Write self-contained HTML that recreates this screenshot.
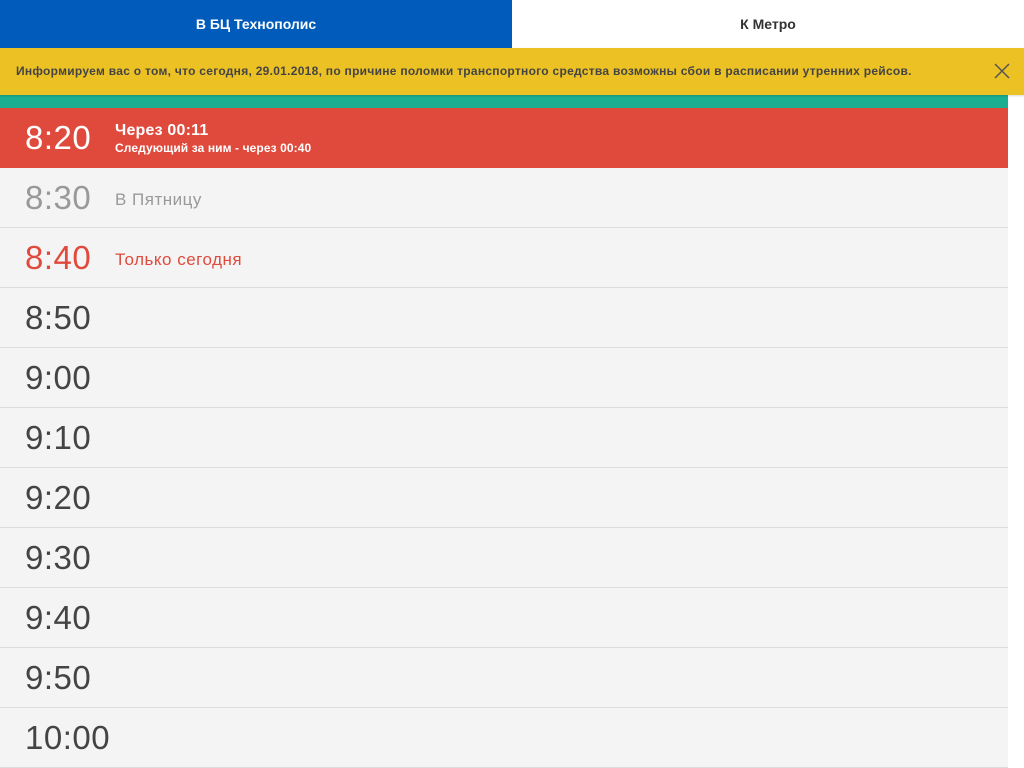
<!DOCTYPE html>
<html><head><meta charset="utf-8"><style>
*{margin:0;padding:0;box-sizing:border-box}
body{width:1024px;height:768px;overflow:hidden;background:#fff;font-family:"Liberation Sans",sans-serif;position:relative}
.tabs{height:48px;display:flex}
.tab{width:512px;height:48px;line-height:48px;text-align:center;font-weight:bold;font-size:14px}
.t1{background:#005bbb;color:#fff}.t2{background:#fff;color:#333}
.ann{position:absolute;top:48px;left:0;width:1024px;height:47px;background:#ecc124;color:#444;font-weight:bold;font-size:12px;line-height:47px;padding-left:16px;letter-spacing:0.28px;box-shadow:0 1px 2px rgba(0,0,0,.15);z-index:2}
.x{position:absolute;right:14px;top:15px;width:16px;height:16px}
.green{position:absolute;top:95px;left:0;width:1008px;height:13px;background:#1bae90}
.list{position:absolute;top:108px;left:0;width:1008px}
.row{height:60px;background:#f4f4f4;border-bottom:1px solid #dcdcdc;position:relative;color:#444}
.tm{position:absolute;left:25px;top:12px;font-size:33px;line-height:36px;letter-spacing:0.5px}
.lab{position:absolute;left:115px;top:22px;font-size:17px;line-height:19px;letter-spacing:0.5px}
.red{background:#e04a3c;color:#fff;border-bottom:none}
.gray{color:#999}.rd{color:#e04a3c}
</style></head><body>
<div class="tabs"><div class="tab t1">В БЦ Технополис</div><div class="tab t2">К Метро</div></div>
<div class="ann">Информируем вас о том, что сегодня, 29.01.2018, по причине поломки транспортного средства возможны сбои в расписании утренних рейсов.
<svg class="x" viewBox="0 0 16 16"><path d="M1 1L15 15M15 1L1 15" stroke="#555" stroke-width="1.5"/></svg></div>
<div class="green"></div>
<div class="list">
<div class="row red"><div class="tm">8:20</div><div style="position:absolute;left:115px;top:14px;font-size:16px;font-weight:bold;line-height:18px;letter-spacing:0.2px">Через 00:11</div><div style="position:absolute;left:115px;top:33px;font-size:12px;font-weight:bold;line-height:14px;letter-spacing:0.1px">Следующий за ним - через 00:40</div></div>
<div class="row gray"><div class="tm">8:30</div><div class="lab">В Пятницу</div></div>
<div class="row rd"><div class="tm">8:40</div><div class="lab">Только сегодня</div></div>
<div class="row"><div class="tm">8:50</div></div>
<div class="row"><div class="tm">9:00</div></div>
<div class="row"><div class="tm">9:10</div></div>
<div class="row"><div class="tm">9:20</div></div>
<div class="row"><div class="tm">9:30</div></div>
<div class="row"><div class="tm">9:40</div></div>
<div class="row"><div class="tm">9:50</div></div>
<div class="row"><div class="tm">10:00</div></div>
</div>
</body></html>
